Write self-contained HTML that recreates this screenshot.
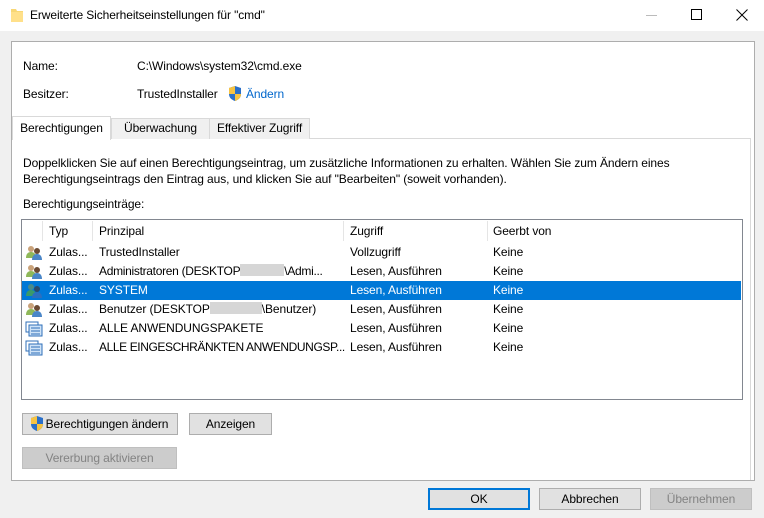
<!DOCTYPE html>
<html><head><meta charset="utf-8"><style>
*{margin:0;padding:0;box-sizing:border-box}
body{width:764px;height:518px;background:#f0f0f0;font-family:"Liberation Sans",sans-serif;font-size:12px;color:#000;position:relative;overflow:hidden;letter-spacing:-0.1px}
.a{position:absolute;white-space:nowrap}
.btn{position:absolute;background:#e1e1e1;border:1px solid #adadad;text-align:center;line-height:20px;height:22px}
.dis{color:#838383;background:#cccccc;border-color:#bfbfbf}
.row{position:absolute;left:22px;width:719px;height:19px;line-height:19px}
.row span{position:absolute;overflow:hidden}
.row span.p{width:246px}
.row i{font-style:normal;display:inline-block;height:12px;background:#d6d6d6;vertical-align:-1px}
</style></head><body>
<div class="a" style="left:0;top:0;width:764px;height:31px;background:#fff"></div>
<svg class="a" style="left:10px;top:7px" width="14" height="16"><path d="M1 2h5l1 2h6v11H1z" fill="#f8d775"/><path d="M1 5h12v10H1z" fill="#ffe08a"/></svg>
<div class="a" style="left:30px;top:8px;font-size:12px">Erweiterte Sicherheitseinstellungen für "cmd"</div>
<div class="a" style="left:646px;top:15px;width:11px;height:1px;background:#bbb"></div>
<div class="a" style="left:691px;top:9px;width:11px;height:11px;border:1px solid #000"></div>
<svg class="a" style="left:736px;top:9px" width="12" height="12"><path d="M0.5 0.5L11.5 11.5M11.5 0.5L0.5 11.5" stroke="#000" stroke-width="1"/></svg>

<div class="a" style="left:11px;top:41px;width:744px;height:440px;background:#fff;border:1px solid #adadad"></div>
<div class="a" style="left:23px;top:59px">Name:</div>
<div class="a" style="left:137px;top:59px">C:\Windows\system32\cmd.exe</div>
<div class="a" style="left:23px;top:87px">Besitzer:</div>
<div class="a" style="left:137px;top:87px">TrustedInstaller</div>
<svg class="a" style="left:227px;top:85px" width="16" height="17"><path d="M8 1L14 3v6c0 4-3 6-6 7-3-1-6-3-6-7V3z" fill="#2a6fc9"/><path d="M8 1v8H2V3zM8 9h6c0 4-3 6-6 7z" fill="#f6c343"/></svg>
<div class="a" style="left:246px;top:87px;color:#0066cc">Ändern</div>

<div class="a" style="left:12px;top:138px;width:738px;height:1px;background:#d9d9d9"></div>
<div class="a" style="left:111px;top:118px;width:99px;height:21px;background:#f0f0f0;border:1px solid #d9d9d9;border-bottom:none;text-align:center;line-height:19px">Überwachung</div>
<div class="a" style="left:209px;top:118px;width:101px;height:21px;background:#f0f0f0;border:1px solid #d9d9d9;border-bottom:none;text-align:center;line-height:19px">Effektiver Zugriff</div>
<div class="a" style="left:12px;top:116px;width:99px;height:24px;background:#fff;border:1px solid #d9d9d9;border-bottom:none;text-align:center;line-height:22px">Berechtigungen</div>
<div class="a" style="left:750px;top:138px;width:1px;height:342px;background:#d9d9d9"></div>

<div class="a" style="left:23px;top:156px">Doppelklicken Sie auf einen Berechtigungseintrag, um zusätzliche Informationen zu erhalten. Wählen Sie zum Ändern eines</div>
<div class="a" style="left:23px;top:172px">Berechtigungseintrags den Eintrag aus, und klicken Sie auf "Bearbeiten" (soweit vorhanden).</div>
<div class="a" style="left:23px;top:197px">Berechtigungseinträge:</div>

<div class="a" style="left:21px;top:219px;width:722px;height:181px;border:1px solid #828790;background:#fff"></div>
<div class="a" style="left:42px;top:221px;width:1px;height:20px;background:#e5e5e5"></div>
<div class="a" style="left:92px;top:221px;width:1px;height:20px;background:#e5e5e5"></div>
<div class="a" style="left:343px;top:221px;width:1px;height:20px;background:#e5e5e5"></div>
<div class="a" style="left:487px;top:221px;width:1px;height:20px;background:#e5e5e5"></div>
<div class="a" style="left:49px;top:224px">Typ</div>
<div class="a" style="left:99px;top:224px">Prinzipal</div>
<div class="a" style="left:350px;top:224px">Zugriff</div>
<div class="a" style="left:493px;top:224px">Geerbt von</div>

<div class="row" style="top:243px"><span style="left:27px">Zulas...</span><span class="p" style="left:77px">TrustedInstaller</span><span style="left:328px">Vollzugriff</span><span style="left:471px">Keine</span></div>
<div class="row" style="top:262px"><span style="left:27px">Zulas...</span><span class="p" style="left:77px;letter-spacing:-0.3px">Administratoren (DESKTOP<i style="width:44px"></i>\Admi...</span><span style="left:328px">Lesen, Ausführen</span><span style="left:471px">Keine</span></div>
<div class="row" style="top:281px;background:#0078d7;color:#fff"><span style="left:27px">Zulas...</span><span class="p" style="left:77px">SYSTEM</span><span style="left:328px">Lesen, Ausführen</span><span style="left:471px">Keine</span></div>
<div class="row" style="top:300px"><span style="left:27px">Zulas...</span><span class="p" style="left:77px">Benutzer (DESKTOP<i style="width:52px"></i>\Benutzer)</span><span style="left:328px">Lesen, Ausführen</span><span style="left:471px">Keine</span></div>
<div class="row" style="top:319px"><span style="left:27px">Zulas...</span><span class="p" style="left:77px">ALLE ANWENDUNGSPAKETE</span><span style="left:328px">Lesen, Ausführen</span><span style="left:471px">Keine</span></div>
<div class="row" style="top:338px"><span style="left:27px">Zulas...</span><span class="p" style="left:77px;letter-spacing:-0.4px">ALLE EINGESCHRÄNKTEN ANWENDUNGSP...</span><span style="left:328px">Lesen, Ausführen</span><span style="left:471px">Keine</span></div>

<svg class="a" style="left:25px;top:245px" width="18" height="16"><circle cx="6" cy="4" r="3" fill="#c9a27a"/><path d="M1 13c0-4 2-6 5-6s5 2 5 6z" fill="#8fb85a"/><circle cx="12" cy="6" r="3" fill="#6a4a33"/><path d="M7 15c0-4 2-6 5-6s5 2 5 6z" fill="#4a86c8"/></svg>
<svg class="a" style="left:25px;top:264px" width="18" height="16"><circle cx="6" cy="4" r="3" fill="#c9a27a"/><path d="M1 13c0-4 2-6 5-6s5 2 5 6z" fill="#8fb85a"/><circle cx="12" cy="6" r="3" fill="#6a4a33"/><path d="M7 15c0-4 2-6 5-6s5 2 5 6z" fill="#4a86c8"/></svg>
<svg class="a" style="left:25px;top:283px" width="18" height="16"><circle cx="6" cy="4" r="3" fill="#4a8a8a"/><path d="M1 13c0-4 2-6 5-6s5 2 5 6z" fill="#3a9a6a"/><circle cx="12" cy="6" r="3" fill="#2a4a6a"/><path d="M7 15c0-4 2-6 5-6s5 2 5 6z" fill="#2a6fc0"/></svg>
<svg class="a" style="left:25px;top:302px" width="18" height="16"><circle cx="6" cy="4" r="3" fill="#c9a27a"/><path d="M1 13c0-4 2-6 5-6s5 2 5 6z" fill="#8fb85a"/><circle cx="12" cy="6" r="3" fill="#6a4a33"/><path d="M7 15c0-4 2-6 5-6s5 2 5 6z" fill="#4a86c8"/></svg>
<svg class="a" style="left:25px;top:321px" width="18" height="16"><rect x="1" y="1" width="12" height="10" fill="#fff" stroke="#2f6fb8"/><rect x="4" y="4" width="13" height="11" fill="#cfe3f7" stroke="#2f6fb8"/><path d="M6 7h9M6 10h9M6 13h9" stroke="#2f6fb8"/></svg>
<svg class="a" style="left:25px;top:340px" width="18" height="16"><rect x="1" y="1" width="12" height="10" fill="#fff" stroke="#2f6fb8"/><rect x="4" y="4" width="13" height="11" fill="#cfe3f7" stroke="#2f6fb8"/><path d="M6 7h9M6 10h9M6 13h9" stroke="#2f6fb8"/></svg>

<div class="btn" style="left:22px;top:413px;width:156px;padding-left:14px">Berechtigungen ändern</div>
<svg class="a" style="left:29px;top:415px" width="16" height="17"><path d="M8 1L14 3v6c0 4-3 6-6 7-3-1-6-3-6-7V3z" fill="#2a6fc9"/><path d="M8 1v8H2V3zM8 9h6c0 4-3 6-6 7z" fill="#f6c343"/></svg>
<div class="btn" style="left:189px;top:413px;width:83px">Anzeigen</div>
<div class="btn dis" style="left:22px;top:447px;width:155px">Vererbung aktivieren</div>

<div class="btn" style="left:428px;top:488px;width:102px;border:2px solid #0078d7;line-height:18px">OK</div>
<div class="btn" style="left:539px;top:488px;width:102px">Abbrechen</div>
<div class="btn dis" style="left:650px;top:488px;width:102px">Übernehmen</div>
</body></html>
